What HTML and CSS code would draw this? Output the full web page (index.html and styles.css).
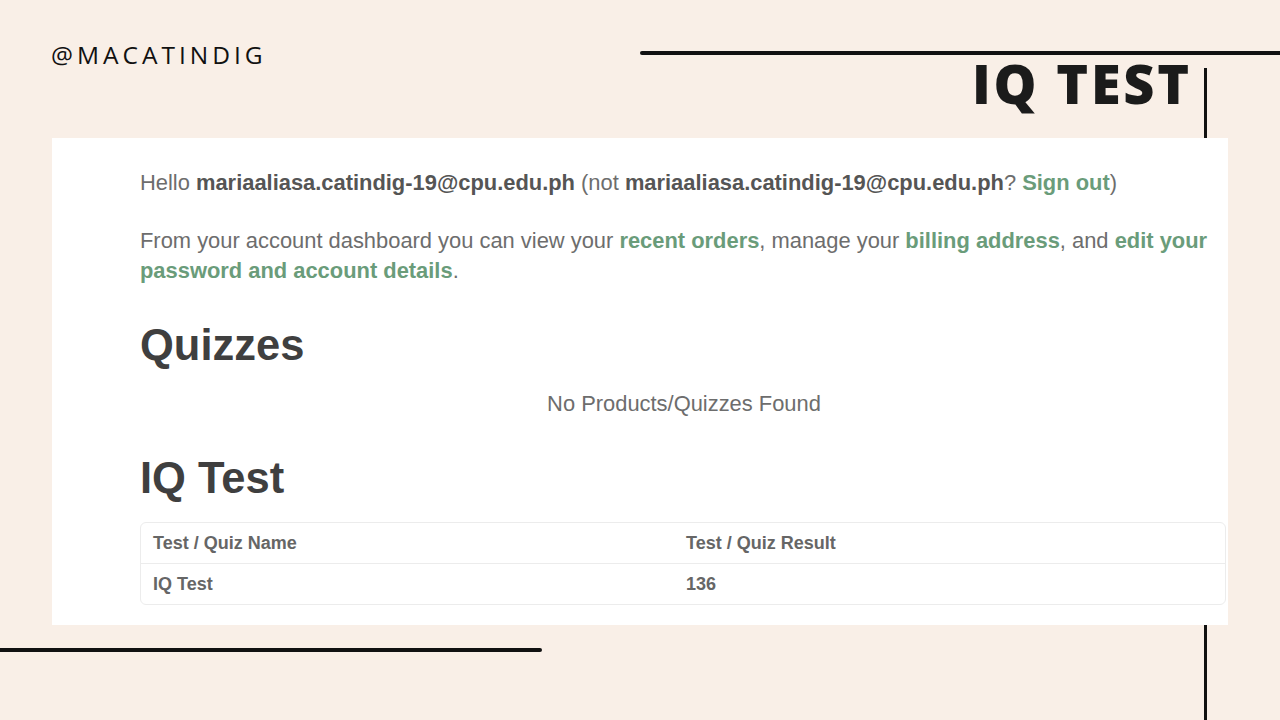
FILE: index.html
```html
<!DOCTYPE html>
<html lang="en">
<head>
<meta charset="utf-8">
<title>IQ Test</title>
<link rel="stylesheet" href="styles.css">
</head>
<body>
<div class="slide">
  <div class="deco deco-top"></div>
  <div class="deco deco-vert"></div>
  <div class="deco deco-bottom"></div>

  <header class="head">
    <div class="brand">@MACATINDIG</div>
    <h1 class="title">IQ TEST</h1>
  </header>

  <main class="panel">
    <p class="txt">Hello <strong>mariaaliasa.catindig-19@cpu.edu.ph</strong> (not <strong>mariaaliasa.catindig-19@cpu.edu.ph</strong>? <a class="lnk" href="#">Sign out</a>)</p>
    <p class="txt">From your account dashboard you can view your <a class="lnk" href="#">recent orders</a>, manage your <a class="lnk" href="#">billing address</a>, and <a class="lnk" href="#">edit your password and account details</a>.</p>

    <h2 class="sec">Quizzes</h2>
    <p class="empty">No Products/Quizzes Found</p>

    <h2 class="sec">IQ Test</h2>
    <div class="tbl">
      <div class="row row-head">
        <div class="cell c1">Test / Quiz Name</div>
        <div class="cell c2">Test / Quiz Result</div>
      </div>
      <div class="row">
        <div class="cell c1">IQ Test</div>
        <div class="cell c2">136</div>
      </div>
    </div>
  </main>
</div>
</body>
</html>
```
FILE: styles.css
```css
html, body {
  margin: 0;
  padding: 0;
}
body {
  background: #f9efe7;
  width: 1280px;
  height: 720px;
  overflow: hidden;
}
.slide {
  position: relative;
  width: 1280px;
  height: 720px;
}
.deco {
  position: absolute;
  background: #111;
  z-index: 0;
}
.deco-top {
  left: 640px;
  top: 51px;
  width: 640px;
  height: 4px;
  border-radius: 2px 0 0 2px;
}
.deco-vert {
  left: 1204px;
  top: 68px;
  width: 3px;
  height: 652px;
}
.deco-bottom {
  left: 0;
  top: 648px;
  width: 542px;
  height: 4px;
  border-radius: 0 2px 2px 0;
}
.head {
  position: relative;
  z-index: 1;
  height: 138px;
  display: flex;
  justify-content: space-between;
  align-items: flex-start;
  padding: 0 88px 0 51px;
  box-sizing: border-box;
}
.brand {
  margin-top: 40px;
  font-family: "Open Sans", "DejaVu Sans", sans-serif;
  font-size: 24.5px;
  line-height: 30px;
  letter-spacing: 4px;
  color: #111;
}
.title {
  margin: 56px 0 0 0;
  font-family: "Open Sans", "DejaVu Sans", sans-serif;
  font-weight: 800;
  font-size: 54px;
  line-height: 54px;
  color: #1b1b1b;
  letter-spacing: 2.8px;
}
.panel {
  position: relative;
  z-index: 2;
  margin-left: 52px;
  width: 1176px;
  height: 487px;
  background: #fff;
  box-sizing: border-box;
  padding: 30px 0 0 88px;
  font-family: "Liberation Sans", Arial, sans-serif;
  color: #6d6d6d;
}
.txt {
  margin: 0 0 28px 0;
  font-size: 21.9px;
  line-height: 30px;
}
.txt strong {
  color: #555;
  font-weight: bold;
}
.lnk {
  color: #6a9c7a;
  font-weight: bold;
  text-decoration: none;
}
.sec {
  margin: 33px 0 0 0;
  font-size: 43.5px;
  line-height: 53px;
  font-weight: bold;
  color: #3f3f3f;
}
.empty {
  margin: 17px 0 0 0;
  text-align: center;
  font-size: 21.9px;
  line-height: 30px;
  color: #6d6d6d;
}
.tbl {
  margin-top: 17px;
  width: 1086px;
  border: 1px solid #ececec;
  border-radius: 6px;
  box-sizing: border-box;
}
.row {
  display: flex;
  height: 40px;
  align-items: center;
}
.row-head {
  border-bottom: 1px solid #ececec;
}
.cell {
  font-size: 18px;
  font-weight: bold;
  color: #666;
  padding-left: 12px;
  box-sizing: border-box;
}
.c1 {
  width: 533px;
}
.c2 {
  flex: 1;
}
```
